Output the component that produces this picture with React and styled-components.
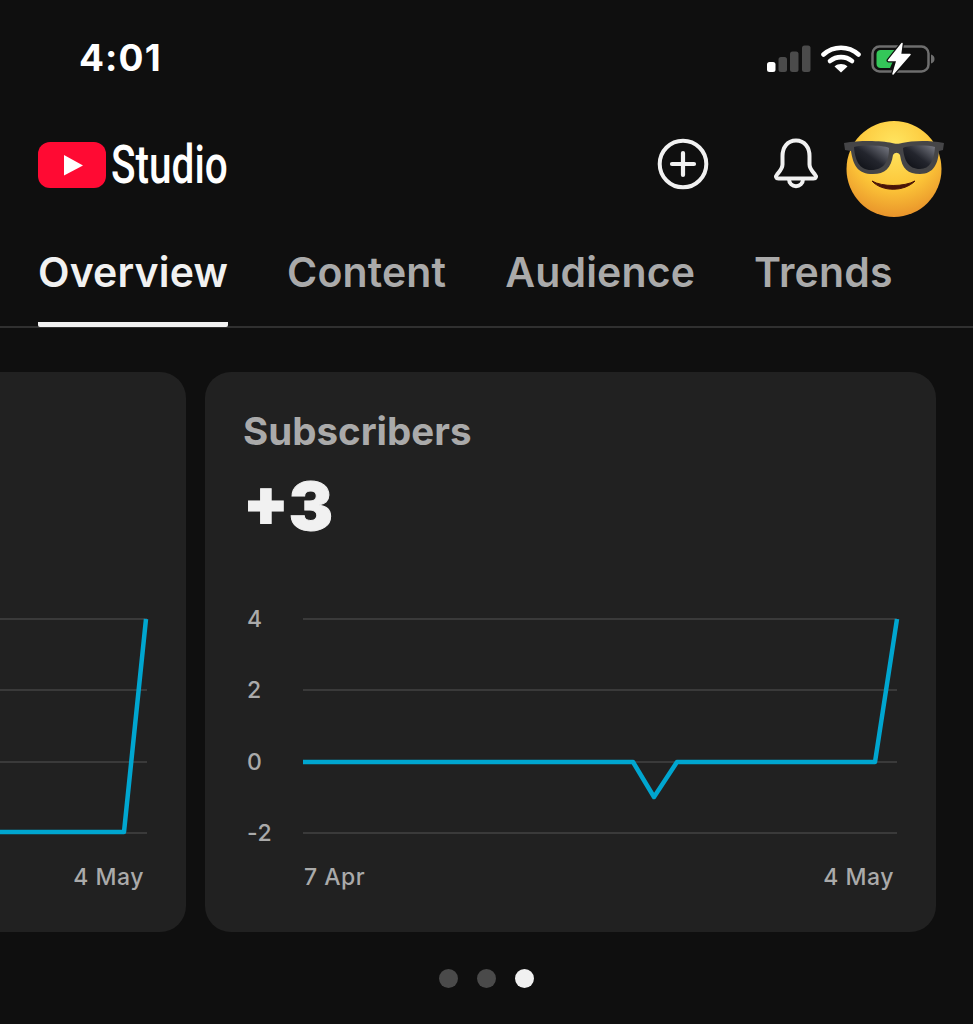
import React from "react";
import styled, { createGlobalStyle } from "styled-components";

const GlobalStyle = createGlobalStyle`
  html, body {
    margin: 0;
    background: #0f0f0f;
  }
  body {
    font-family: Inter, "Liberation Sans", sans-serif;
    -webkit-font-smoothing: antialiased;
  }
`;

const Page = styled.div`
  width: 973px;
  height: 1024px;
  overflow: hidden;
  background: #0f0f0f;
  color: #f1f1f1;
`;

/* status bar */

const StatusBar = styled.div`
  height: 118px;
  box-sizing: border-box;
  padding: 37px 38px 0 79px;
  display: flex;
  justify-content: space-between;
  align-items: flex-start;
`;

const Clock = styled.div`
  font-size: 37px;
  line-height: 42px;
  font-weight: 700;
  letter-spacing: 1.1px;
  color: #fff;
`;

const StatusIcons = styled.div`
  display: flex;
  align-items: center;
  margin-top: 5px;
`;

const SignalIcon = () => (
  <svg width="44" height="28" viewBox="0 0 44 28" style={{ display: "block" }}>
    <rect x="0" y="17" width="8.5" height="10" rx="2.5" fill="#fff" />
    <rect x="11.5" y="12" width="8.5" height="15" rx="2.5" fill="#4b4b4b" />
    <rect x="23" y="6.5" width="8.5" height="20.5" rx="2.5" fill="#4b4b4b" />
    <rect x="35" y="0.5" width="8.5" height="26.5" rx="2.5" fill="#4b4b4b" />
  </svg>
);

const WifiIcon = () => (
  <svg width="40" height="28" viewBox="0 0 40 28" style={{ display: "block", marginLeft: 10 }}>
    <path d="M2.5 9.5C12.500 0.500 27.500 0.500 37.500 9.500" fill="none" stroke="#fff" strokeWidth="4.6" strokeLinecap="round" />
    <path d="M9 16C15.500 10.800 24.500 10.800 31 16" fill="none" stroke="#fff" strokeWidth="4.6" strokeLinecap="round" />
    <path d="M13.500 21.500C17.500 18.300 22.500 18.300 26.500 21.500L20 27.500Z" fill="#fff" />
  </svg>
);

const BatteryIcon = () => (
  <svg width="64" height="34" viewBox="0 0 64 34" style={{ display: "block", marginLeft: 10 }}>
    <rect x="1.500" y="4.500" width="56" height="25" rx="7" fill="none" stroke="#6e6e6e" strokeWidth="2.500" />
    <path d="M60 12.500c2.500 .8 3.500 2.500 3.500 4.500s-1 3.700-3.500 4.500z" fill="#6e6e6e" />
    <path d="M9.500 8H27L19 26H9.500c-2 0-4-1.500-4-4V12c0-2.500 2-4 4-4z" fill="#34c759" />
    <path d="M31 1.500L17.500 18.500H26L22 32L39 12.500H29.500Z" fill="#0f0f0f" stroke="#0f0f0f" strokeWidth="4" strokeLinejoin="round" />
    <path d="M31 1.500L17.500 18.500H26L22 32L39 12.500H29.500Z" fill="#fff" stroke="#fff" strokeWidth="1.500" strokeLinejoin="round" />
  </svg>
);

/* header */

const Header = styled.header`
  height: 99px;
  box-sizing: border-box;
  padding: 0 29px 0 38px;
  display: flex;
  align-items: flex-start;
  justify-content: space-between;
`;

const Logo = styled.div`
  display: flex;
  align-items: center;
  height: 94px;
`;

const StudioName = styled.span`
  font-family: Roboto, "Liberation Sans", sans-serif;
  font-size: 53px;
  line-height: 60px;
  font-weight: 500;
  color: #fff;
  margin-left: 5px;
  transform-origin: left center;
  transform: scaleX(0.765);
`;

const HeaderActions = styled.div`
  display: flex;
  align-items: flex-start;
`;

const IconButton = styled.div`
  display: flex;
  margin-top: ${(p) => p.$top}px;
  margin-right: ${(p) => p.$right}px;
`;

const PlayLogo = () => (
  <svg width="68" height="46" viewBox="0 0 68 46" style={{ display: "block" }}>
    <rect x="0" y="0" width="68" height="46" rx="12" fill="#ff0a33" />
    <path d="M26 13L45 23.500L26 33.500Z" fill="#fff" />
  </svg>
);

const AddIcon = () => (
  <svg width="52" height="52" viewBox="0 0 52 52" style={{ display: "block" }}>
    <circle cx="26" cy="26" r="23.300" fill="none" stroke="#f1f1f1" strokeWidth="4" />
    <path d="M26 15V37M15 26H37" fill="none" stroke="#f1f1f1" strokeWidth="4.200" strokeLinecap="round" />
  </svg>
);

const BellIcon = () => (
  <svg width="46" height="52" viewBox="0 0 46 52" style={{ display: "block" }}>
    <path
      d="M23 2.500C32 2.500 36.500 10 36.500 18V26.500C36.500 30.500 39 33 42 36.500C43.800 38.500 43 40.500 40.500 40.500H5.500C3 40.500 2.200 38.500 4 36.500C7 33 9.500 30.500 9.500 26.500V18C9.500 10 14 2.500 23 2.500Z"
      fill="none"
      stroke="#f1f1f1"
      strokeWidth="4"
      strokeLinejoin="round"
    />
    <path d="M16 41C16 50.500 30 50.500 30 41" fill="none" stroke="#f1f1f1" strokeWidth="4" />
  </svg>
);

const Avatar = () => (
  <svg width="102" height="98" viewBox="0 0 102 98" style={{ display: "block", overflow: "visible" }}>
    <defs>
      <radialGradient id="face" cx="50%" cy="26%" r="80%">
        <stop offset="0%" stopColor="#ffe661" />
        <stop offset="55%" stopColor="#fcc538" />
        <stop offset="100%" stopColor="#e58a28" />
      </radialGradient>
      <linearGradient id="lens" x1="0" y1="1" x2="1" y2="0">
        <stop offset="0%" stopColor="#0b0d12" />
        <stop offset="50%" stopColor="#23252d" />
        <stop offset="100%" stopColor="#7a7c85" />
      </linearGradient>
    </defs>
    <ellipse cx="52" cy="49" rx="47.500" ry="48" fill="url(#face)" />
    <path
      d="M2 23C20 20 40 21 50 23C52 24 58 24 60 23C70 21 85 20 102 23L101 30L97 31C96 43 92 54 78 54C66 54 60 49 58 35C56 32 53 32 51 35C49 49 42 55 28 54C15 53 11 44 9 31L3 30Z"
      fill="#454547"
    />
    <path d="M12 27C20 25 40 25 47 28C47 40 43 50 29 50C17 50 13 40 12 27Z" fill="url(#lens)" />
    <path d="M93 27C85 25 68 25 61 28C62 40 66 49 78 49C88 49 92 40 93 27Z" fill="url(#lens)" />
    <path d="M30 61C40 72 62 72 73 61C62 67 40 67 30 61Z" fill="#4a1408" stroke="#4a1408" strokeWidth="1" strokeLinejoin="round" />
  </svg>
);

/* tabs */

const Tabs = styled.nav`
  height: 111px;
  box-sizing: border-box;
  padding: 0 38px;
  display: flex;
  gap: 59px;
  border-bottom: 2px solid #303030;
`;

const Tab = styled.div`
  box-sizing: border-box;
  height: 110px;
  padding-top: 32px;
  font-size: 41px;
  line-height: 46px;
  font-weight: 600;
  letter-spacing: 0.15px;
  color: ${(p) => (p.$active ? "#f1f1f1" : "#aaaaaa")};
  border-bottom: ${(p) => (p.$active ? "5px solid #f1f1f1" : "none")};
  border-radius: 0 0 2px 2px;
`;

/* cards */

const Carousel = styled.div`
  margin-top: 44px;
  margin-left: -545px;
  display: flex;
  gap: 19px;
`;

const Card = styled.section`
  flex: 0 0 731px;
  height: 560px;
  box-sizing: border-box;
  padding: 37px 39px 0 38px;
  background: #212121;
  border-radius: 26px;
`;

const CardTitle = styled.div`
  height: 44px;
  font-size: 38.500px;
  line-height: 44px;
  font-weight: 700;
  color: #aaaaaa;
`;

const CardValue = styled.div`
  height: 64px;
  margin-top: 21px;
  font-size: 66px;
  line-height: 64px;
  font-weight: 900;
  -webkit-text-stroke: 1px #f1f1f1;
  color: #f1f1f1;
`;

const ChartRow = styled.div`
  margin-top: 81px;
  display: flex;
  align-items: stretch;
`;

const YAxis = styled.div`
  box-sizing: border-box;
  flex: 0 0 60px;
  height: 242px;
  margin-top: -14px;
  padding-left: 4px;
  display: flex;
  flex-direction: column;
  justify-content: space-between;
`;

const AxisLabel = styled.span`
  font-size: 23px;
  line-height: 28px;
  font-weight: 500;
  letter-spacing: 0.5px;
  color: #aaaaaa;
`;

const XAxis = styled.div`
  margin: 16px 3px 0 61px;
  display: flex;
  justify-content: space-between;
`;

const Dots = styled.div`
  margin-top: 37px;
  display: flex;
  justify-content: center;
  gap: 19px;
`;

const Dot = styled.span`
  width: 19px;
  height: 19px;
  border-radius: 50%;
  background: ${(p) => (p.$active ? "#f1f1f1" : "#4a4a4a")};
`;

const Plot = ({ points }) => (
  <svg width="594" height="216" viewBox="0 0 594 216" style={{ display: "block", overflow: "visible" }}>
    {[0, 71, 143, 214].map((y) => (
      <line key={y} x1="0" x2="594" y1={y} y2={y} stroke="#3a3a3a" strokeWidth="2" />
    ))}
    <polyline points={points} fill="none" stroke="#00a6d0" strokeWidth="4.500" strokeLinejoin="round" />
  </svg>
);

// the first card is scrolled almost off the page, only its right end shows
const ChartCard = ({ title, value, from, yLabels, points }) => (
  <Card>
    <CardTitle>{title}</CardTitle>
    <CardValue>{value}</CardValue>
    <ChartRow>
      <YAxis>
        {yLabels.map((label) => (
          <AxisLabel key={label}>{label}</AxisLabel>
        ))}
      </YAxis>
      <Plot points={points} />
    </ChartRow>
    <XAxis>
      <AxisLabel>{from}</AxisLabel>
      <AxisLabel>4 May</AxisLabel>
    </XAxis>
  </Card>
);

export default function App() {
  return (
    <Page>
      <GlobalStyle />
      <StatusBar>
        <Clock>4:01</Clock>
        <StatusIcons>
          <SignalIcon />
          <WifiIcon />
          <BatteryIcon />
        </StatusIcons>
      </StatusBar>
      <Header>
        <Logo>
          <PlayLogo />
          <StudioName>Studio</StudioName>
        </Logo>
        <HeaderActions>
          <IconButton $top={20} $right={64}>
            <AddIcon />
          </IconButton>
          <IconButton $top={20} $right={23}>
            <BellIcon />
          </IconButton>
          <IconButton $top={2} $right={0}>
            <Avatar />
          </IconButton>
        </HeaderActions>
      </Header>
      <Tabs>
        <Tab $active>Overview</Tab>
        <Tab>Content</Tab>
        <Tab>Audience</Tab>
        <Tab>Trends</Tab>
      </Tabs>
      <Carousel>
        <ChartCard yLabels={[]} points="0,213 571,213 593,0" />
        <ChartCard
          title="Subscribers"
          value="+3"
          from="7 Apr"
          yLabels={["4", "2", "0", "-2"]}
          points="0,143 330,143 351,178 374,143 572,143 594,0"
        />
      </Carousel>
      <Dots>
        <Dot />
        <Dot />
        <Dot $active />
      </Dots>
    </Page>
  );
}
